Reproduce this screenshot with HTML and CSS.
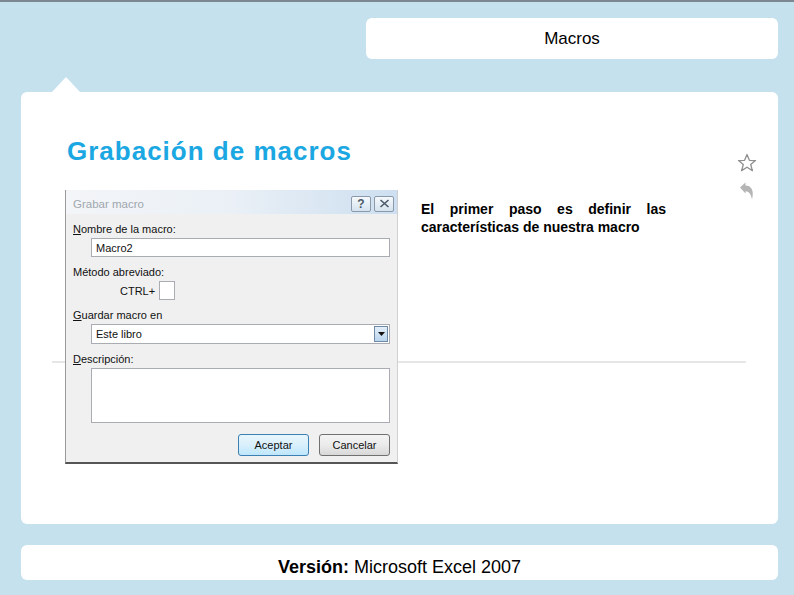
FILE: index.html
```html
<!DOCTYPE html>
<html lang="es">
  <head>
    <meta charset="UTF-8" />
    <meta name="viewport" content="width=device-width, initial-scale=1.0" />
    <title>Macros</title>
    <link rel="stylesheet" href="styles.css">
  </head>
  <body>
    <div class="pagina">
      <header class="cabecera">
        <div class="titulo">Macros</div>
      </header>

      <main class="tarjeta">
        <section class="contenido">
          <h1>Grabación de macros</h1>
          <div class="fila">
            <div class="dialogo">
              <div class="barra">
                <span class="barra-texto">Grabar macro</span>
                <span class="barra-botones">
                  <span class="mini">?</span>
                  <span class="mini">
                    <svg width="11" height="9" viewBox="0 0 11 9"><path d="M1.5 1 L9.5 8 M9.5 1 L1.5 8" stroke="#4a5a6a" stroke-width="1.6"/></svg>
                  </span>
                </span>
              </div>
              <div class="cuerpo">
                <div class="etiqueta"><u>N</u>ombre de la macro:</div>
                <div class="campo">Macro2</div>
                <div class="etiqueta">Método abreviado:</div>
                <div class="atajo"><span>CTRL+</span><span class="caja"></span></div>
                <div class="etiqueta"><u>G</u>uardar macro en</div>
                <div class="campo lista">
                  <span>Este libro</span>
                  <span class="flecha">
                    <svg width="9" height="6" viewBox="0 0 9 6"><path d="M1 1 L8 1 L4.5 5 Z" fill="#111"/></svg>
                  </span>
                </div>
                <div class="etiqueta"><u>D</u>escripción:</div>
                <div class="campo area"></div>
                <div class="botones">
                  <span class="boton principal">Aceptar</span>
                  <span class="boton">Cancelar</span>
                </div>
              </div>
            </div>
            <p class="texto">El primer paso es definir las características de nuestra macro</p>
          </div>
        </section>
        <aside class="herramientas">
          <svg width="20" height="20" viewBox="0 0 20 20"><path d="M10 1.5 L12.4 7.3 L18.5 7.6 L13.7 11.5 L15.4 17.6 L10 14.2 L4.6 17.6 L6.3 11.5 L1.5 7.6 L7.6 7.3 Z" fill="none" stroke="#8f8f8f" stroke-width="1.3" stroke-linejoin="round"/></svg>
          <svg width="18" height="20" viewBox="0 0 18 20"><path d="M2 6.5 L7.5 1.5 L7.5 4.5 C13 4.5 16.5 9 14 18.5 C13.2 13.5 11 10.2 7.5 10.2 L7.5 12.5 Z" fill="#b5b5b5"/></svg>
        </aside>
      </main>

      <footer class="pie">
        <b>Versión:</b> Microsoft Excel 2007
      </footer>
    </div>
  </body>
</html>
```

FILE: styles.css
```css
body {
  margin: 0;
  background-color: #c5e1ee;
  font-family: "Liberation Sans", Arial, sans-serif;
  border-top: 2px solid #7d8791;
}
.pagina {
  padding: 16px 16px 0 21px;
}
.cabecera {
  display: flex;
  justify-content: flex-end;
}
.titulo {
  width: 412px;
  height: 41px;
  background-color: white;
  border-radius: 6px;
  display: flex;
  align-items: center;
  justify-content: center;
  font-size: 17px;
  color: #000;
}
.tarjeta {
  position: relative;
  margin-top: 33px;
  height: 432px;
  background-color: white;
  border-radius: 6px;
  display: flex;
}
.tarjeta::before {
  content: "";
  position: absolute;
  left: 31px;
  top: -15px;
  border-left: 14px solid transparent;
  border-right: 14px solid transparent;
  border-bottom: 15px solid white;
}
.tarjeta::after {
  content: "";
  position: absolute;
  left: 31px;
  top: 269px;
  width: 694px;
  height: 2px;
  background-color: #e6e6e6;
}
.contenido {
  flex: 1;
  padding: 44px 0 0 44px;
}
h1 {
  margin: 0 0 0 2px;
  font-size: 26px;
  line-height: 30px;
  letter-spacing: 1px;
  color: #1ba7e2;
}
.fila {
  display: flex;
  margin-top: 24px;
  gap: 23px;
}
.texto {
  width: 245px;
  margin: 10px 0 0;
  font-size: 14px;
  line-height: 18px;
  font-weight: bold;
  text-align: justify;
  color: #000;
}
.herramientas {
  width: 62px;
  padding-top: 61px;
  display: flex;
  flex-direction: column;
  align-items: center;
  gap: 8px;
}

/* ventana de excel */
.dialogo {
  position: relative;
  z-index: 1;
  width: 333px;
  height: 274px;
  box-sizing: border-box;
  background-color: #f0f0f0;
  border-left: 1px solid #9a9a9a;
  border-right: 1px solid #d0d0d0;
  border-bottom: 2px solid #555;
  font-size: 11px;
  color: #111;
}
.barra {
  height: 24px;
  box-sizing: border-box;
  padding: 3px 3px 0 7px;
  display: flex;
  align-items: center;
  justify-content: space-between;
  background: linear-gradient(to right, #f3f5f8 0%, #eaf0f6 50%, #cddff0 100%);
  border-top-left-radius: 4px;
}
.barra-texto {
  color: #a0a7ae;
  font-size: 11.5px;
}
.barra-botones {
  display: flex;
  gap: 3px;
}
.mini {
  width: 18px;
  height: 14px;
  border: 1px solid #8a9aab;
  border-radius: 2px;
  background: linear-gradient(#f6f9fc, #d5e3ef);
  display: flex;
  align-items: center;
  justify-content: center;
  font-size: 12px;
  font-weight: bold;
  color: #4a5a6a;
}
.cuerpo {
  padding: 0 7px 0 7px;
}
.etiqueta {
  margin-top: 8px;
  line-height: 14px;
}
.campo {
  margin: 2px 0 0 18px;
  height: 19px;
  box-sizing: border-box;
  border: 1px solid #a9adb3;
  background-color: white;
  padding: 0 4px;
  display: flex;
  align-items: center;
}
.lista {
  height: 20px;
  justify-content: space-between;
  padding-right: 1px;
}
.flecha {
  width: 14px;
  height: 16px;
  box-sizing: border-box;
  border: 1px solid #6f8aa6;
  background: linear-gradient(#e3eef9, #b9d5ee);
  display: flex;
  align-items: center;
  justify-content: center;
}
.area {
  height: 55px;
}
.atajo {
  margin: 2px 0 0 47px;
  display: flex;
  align-items: center;
  gap: 4px;
}
.caja {
  width: 16px;
  height: 19px;
  box-sizing: border-box;
  border: 1px solid #a9adb3;
  background-color: white;
}
.botones {
  margin-top: 11px;
  display: flex;
  justify-content: flex-end;
  gap: 10px;
}
.boton {
  width: 71px;
  height: 22px;
  box-sizing: border-box;
  border: 1px solid #707070;
  border-radius: 3px;
  background: linear-gradient(#f4f4f4 0%, #ebebeb 50%, #d8d8d8 100%);
  display: flex;
  align-items: center;
  justify-content: center;
}
.principal {
  border-color: #3c7fb1;
  background: linear-gradient(#eaf6fd 0%, #d9f0fc 50%, #bee6fd 100%);
}
.pie {
  margin-top: 21px;
  height: 35px;
  background-color: white;
  border-radius: 6px;
  display: flex;
  align-items: center;
  justify-content: center;
  gap: 5px;
  font-size: 18px;
  padding-top: 9px;
  box-sizing: border-box;
}
```
